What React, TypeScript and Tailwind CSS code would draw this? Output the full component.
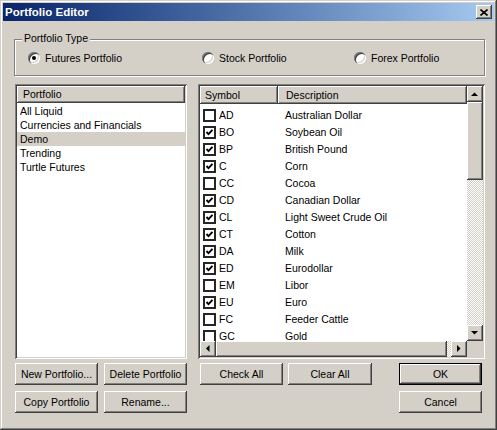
import React from "react";

const raised =
  "shadow-[inset_-1px_-1px_0_#404040,inset_1px_1px_0_#ffffff,inset_-2px_-2px_0_#808080,inset_2px_2px_0_#d4d0c8]";
const sunken =
  "shadow-[inset_1px_1px_0_#808080,inset_-1px_-1px_0_#ffffff,inset_2px_2px_0_#404040,inset_-2px_-2px_0_#d4d0c8]";
const headerCell =
  "shadow-[inset_-1px_-1px_0_#404040,inset_1px_1px_0_#ffffff,inset_-2px_-2px_0_#808080]";

const portfolios = ["All Liquid", "Currencies and Financials", "Demo", "Trending", "Turtle Futures"];

const symbols: [string, string, boolean][] = [
  ["AD", "Australian Dollar", false],
  ["BO", "Soybean Oil", true],
  ["BP", "British Pound", true],
  ["C", "Corn", true],
  ["CC", "Cocoa", false],
  ["CD", "Canadian Dollar", true],
  ["CL", "Light Sweet Crude Oil", true],
  ["CT", "Cotton", true],
  ["DA", "Milk", true],
  ["ED", "Eurodollar", true],
  ["EM", "Libor", false],
  ["EU", "Euro", true],
  ["FC", "Feeder Cattle", false],
  ["GC", "Gold", false],
];

const arrows: Record<string, string> = {
  up: "4,10 11,10 7.5,6.5",
  down: "4,6 11,6 7.5,9.5",
  left: "9.5,4 9.5,11 6,7.5",
  right: "6,4 6,11 9.5,7.5",
};

function ScrollBtn({ dir }: { dir: string }) {
  return (
    <div className={`w-[16px] h-[16px] shrink-0 bg-[#d4d0c8] ${raised}`}>
      <svg width="16" height="16" viewBox="0 0 16 16">
        <polygon points={arrows[dir]} fill="#000" />
      </svg>
    </div>
  );
}

function Radio({ checked, label }: { checked?: boolean; label: string }) {
  return (
    <div className="flex items-center gap-[5px]">
      <span className="w-[12px] h-[12px] rounded-full bg-white flex items-center justify-center shadow-[inset_1px_1px_0_#808080,inset_2px_2px_0_#404040,inset_-1px_-1px_0_#ffffff,inset_-2px_-2px_0_#d4d0c8]">
        {checked && <span className="w-[4px] h-[4px] rounded-full bg-black" />}
      </span>
      <span>{label}</span>
    </div>
  );
}

function Check({ on }: { on: boolean }) {
  return (
    <span className="w-[13px] h-[13px] shrink-0 bg-white border-2 border-[#262626] flex items-center justify-center">
      {on && (
        <svg width="9" height="9" viewBox="0 0 9 9">
          <path d="M1.5 4 L3.5 6.2 L7.5 1.8" fill="none" stroke="#000" strokeWidth="1.9" />
        </svg>
      )}
    </span>
  );
}

function Btn({ children, className = "", def = false }: { children: React.ReactNode; className?: string; def?: boolean }) {
  if (def) {
    return (
      <div className={`h-[22px] border border-black ${className}`}>
        <div className={`h-full flex items-center justify-center bg-[#d4d0c8] ${raised}`}>{children}</div>
      </div>
    );
  }
  return (
    <div className={`h-[22px] flex items-center justify-center bg-[#d4d0c8] ${raised} ${className}`}>{children}</div>
  );
}

export default function App() {
  return (
    <div
      className={`w-[497px] h-[430px] bg-[#d4d0c8] p-[3px] flex flex-col text-[10.5px] leading-[13px] text-black font-['Liberation_Sans',Arial,sans-serif] shadow-[inset_-1px_-1px_0_#404040,inset_1px_1px_0_#d4d0c8,inset_-2px_-2px_0_#808080,inset_2px_2px_0_#ffffff]`}
    >
      {/* Title bar */}
      <div className="h-[18px] flex items-center justify-between pl-[2px] pr-[2px] bg-linear-to-r from-[#0a246a] to-[#a6caf0]">
        <span className="text-white font-bold text-[11.5px]">Portfolio Editor</span>
        <div className={`w-[16px] h-[14px] bg-[#d4d0c8] flex items-center justify-center ${raised}`}>
          <svg width="8" height="7" viewBox="0 0 8 7">
            <path d="M0.5 0.5 L7.5 6.5 M7.5 0.5 L0.5 6.5" stroke="#000" strokeWidth="1.6" />
          </svg>
        </div>
      </div>

      {/* Portfolio type group */}
      <div className="relative mt-[18px] ml-[11px] mr-[9px] h-[37px] border border-[#808080] shadow-[inset_1px_1px_0_#ffffff,1px_1px_0_#ffffff] grid grid-cols-[174px_152px_1fr] items-center pl-[13px] pt-[1px]">
        <span className="absolute left-[7px] top-[-8px] px-[2px] bg-[#d4d0c8]">Portfolio Type</span>
        <Radio checked label="Futures Portfolio" />
        <Radio label="Stock Portfolio" />
        <Radio label="Forex Portfolio" />
      </div>

      <div className="flex mt-[8px] ml-[12px] gap-[11px]">
        {/* Left column */}
        <div className="w-[172px] flex flex-col">
          <div className={`h-[275px] bg-white p-[2px] flex flex-col ${sunken}`}>
            <div className={`h-[17px] shrink-0 bg-[#d4d0c8] flex items-center pl-[6px] ${headerCell}`}>Portfolio</div>
            <div className="pt-[1px]">
              {portfolios.map((p) => (
                <div key={p} className={`h-[14px] flex items-center pl-[3px] ${p === "Demo" ? "bg-[#d4d0c8]" : ""}`}>
                  {p}
                </div>
              ))}
            </div>
          </div>
          <div className="grid grid-cols-[83px_83px] gap-x-[6px] gap-y-[6px] mt-[4px]">
            <Btn>New Portfolio...</Btn>
            <Btn>Delete Portfolio</Btn>
            <Btn>Copy Portfolio</Btn>
            <Btn>Rename...</Btn>
          </div>
        </div>

        {/* Right column */}
        <div className="w-[287px] flex flex-col">
          <div className={`h-[275px] bg-white p-[2px] flex flex-col ${sunken}`}>
            <div className="flex flex-1 min-h-0">
              <div className="flex-1 flex flex-col overflow-hidden">
                <div className="h-[18px] shrink-0 flex">
                  <div className={`w-[78px] bg-[#d4d0c8] flex items-center pl-[5px] ${headerCell}`}>Symbol</div>
                  <div className={`flex-1 bg-[#d4d0c8] flex items-center pl-[8px] ${headerCell}`}>Description</div>
                </div>
                <div className="pt-[3px]">
                  {symbols.map(([s, d, on]) => (
                    <div key={s} className="h-[17px] flex items-center">
                      <div className="w-[78px] flex items-center gap-[3px] pl-[3px]">
                        <Check on={on} />
                        <span>{s}</span>
                      </div>
                      <span className="pl-[7px]">{d}</span>
                    </div>
                  ))}
                </div>
              </div>
              <div className="w-[16px] flex flex-col bg-[repeating-conic-gradient(#ffffff_0_25%,#d4d0c8_0_50%)] bg-[length:2px_2px]">
                <ScrollBtn dir="up" />
                <div className={`h-[78px] shrink-0 bg-[#d4d0c8] ${raised}`} />
                <div className="flex-1" />
                <ScrollBtn dir="down" />
              </div>
            </div>
            <div className="h-[16px] shrink-0 flex">
              <div className="flex-1 flex bg-[repeating-conic-gradient(#ffffff_0_25%,#d4d0c8_0_50%)] bg-[length:2px_2px]">
                <ScrollBtn dir="left" />
                <div className={`flex-1 bg-[#d4d0c8] ${raised}`} />
                <div className="w-[4px]" />
                <ScrollBtn dir="right" />
              </div>
              <div className="w-[16px] bg-[#d4d0c8]" />
            </div>
          </div>
          <div className="flex mt-[4px]">
            <div className="flex gap-[5px] ml-[2px]">
              <Btn className="w-[83px]">Check All</Btn>
              <Btn className="w-[84px]">Clear All</Btn>
            </div>
            <div className="ml-auto mr-[3px] w-[83px] flex flex-col gap-[6px]">
              <Btn def>OK</Btn>
              <Btn>Cancel</Btn>
            </div>
          </div>
        </div>
      </div>
    </div>
  );
}
